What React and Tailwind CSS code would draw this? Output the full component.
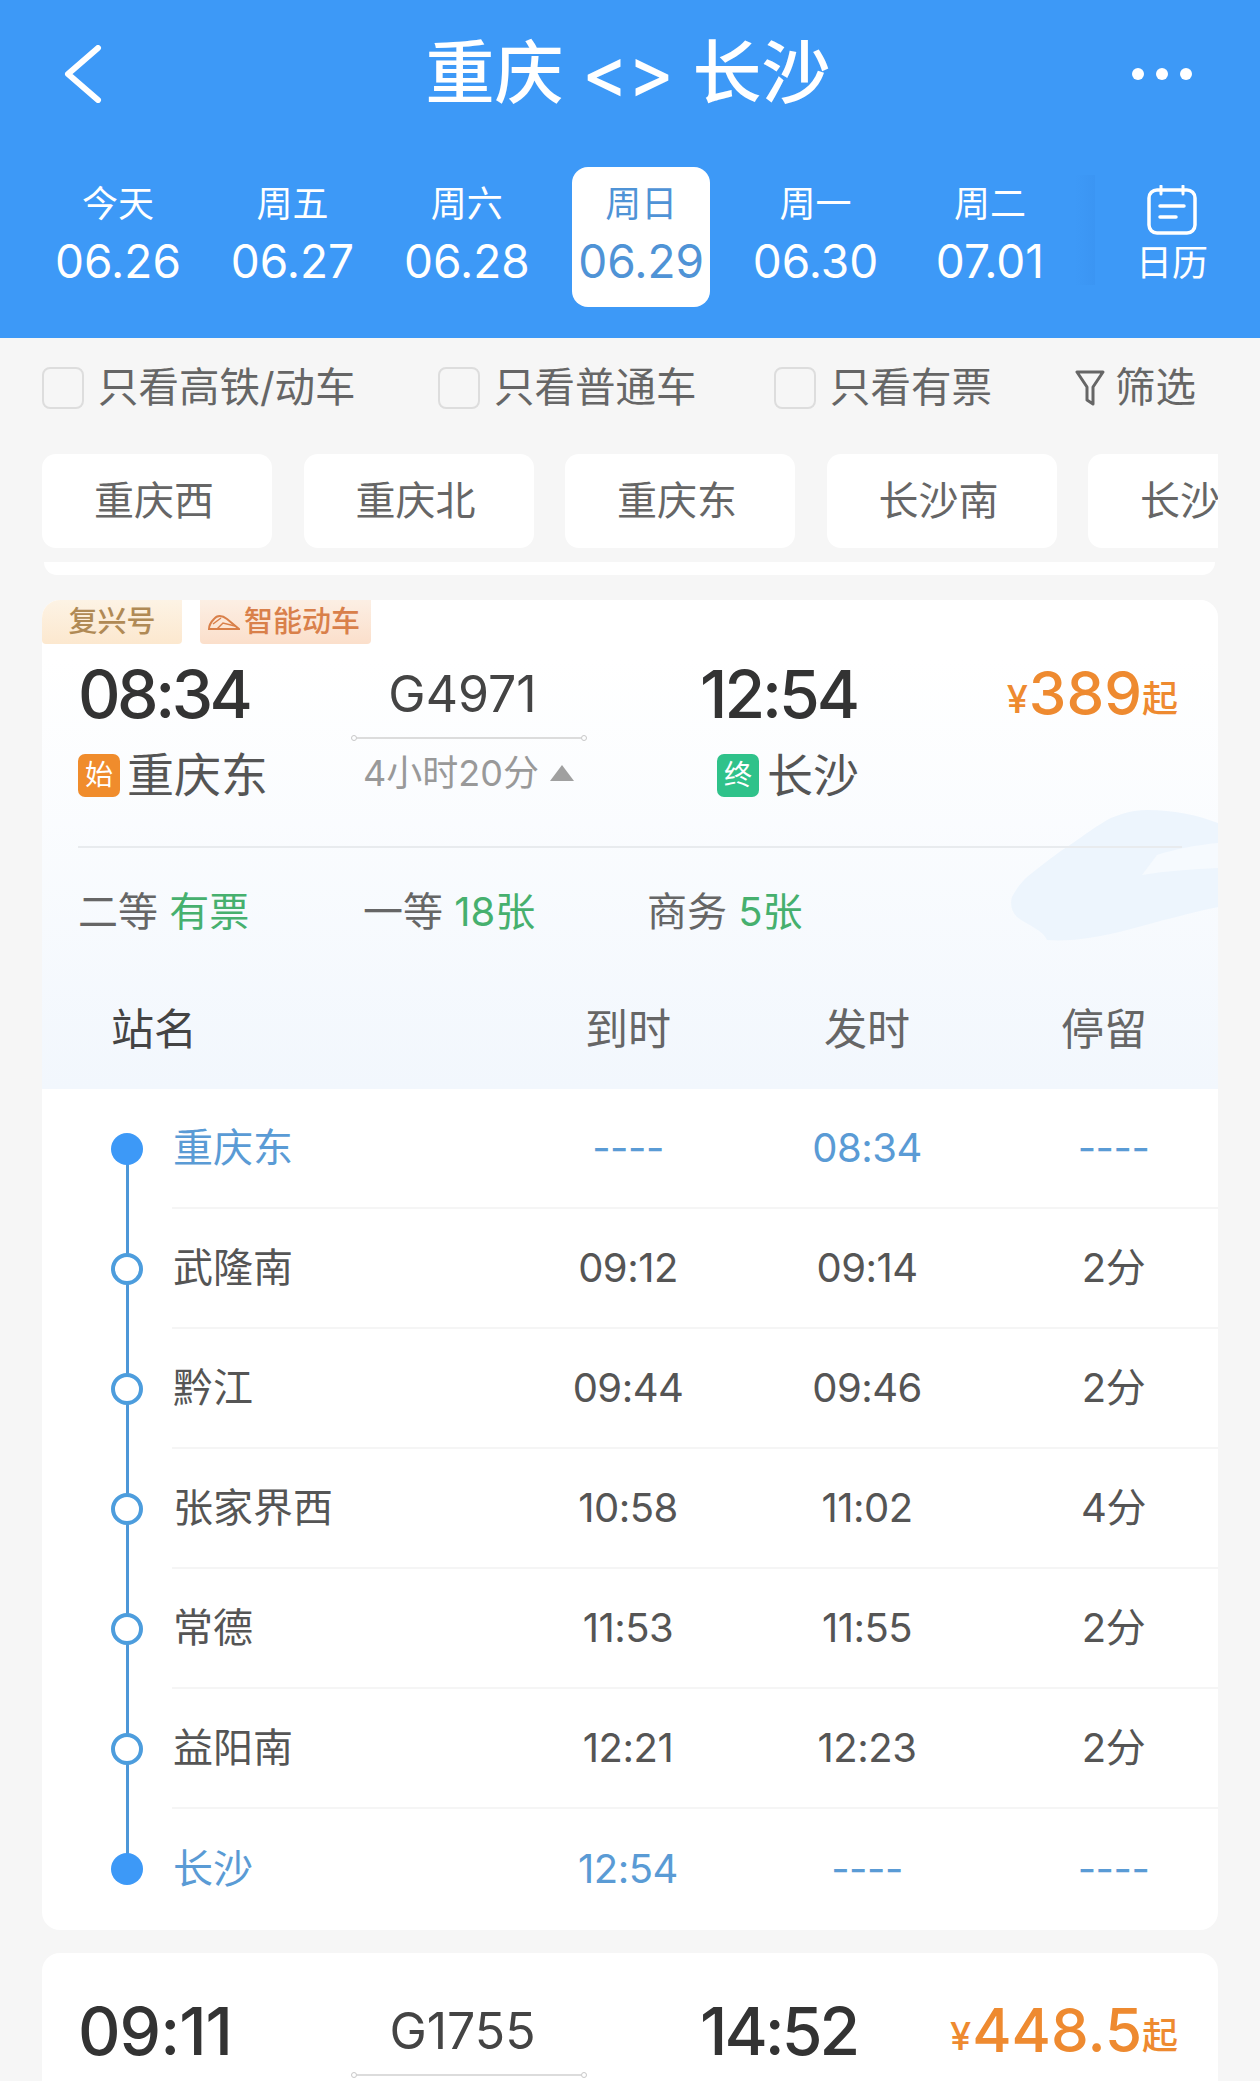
const days = [
  ['今天', '06.26'],
  ['周五', '06.27'],
  ['周六', '06.28'],
  ['周日', '06.29'],
  ['周一', '06.30'],
  ['周二', '07.01'],
]

const filters = [
  ['只看高铁/动车', 'w-[396px]'],
  ['只看普通车', 'w-[336px]'],
  ['只看有票', 'w-[301px]'],
]

const chips = ['重庆西', '重庆北', '重庆东', '长沙南', '长沙']

const stops = [
  { name: '重庆东', arrive: '----', leave: '08:34', stay: '----', edge: true },
  { name: '武隆南', arrive: '09:12', leave: '09:14', stay: '2分' },
  { name: '黔江', arrive: '09:44', leave: '09:46', stay: '2分' },
  { name: '张家界西', arrive: '10:58', leave: '11:02', stay: '4分' },
  { name: '常德', arrive: '11:53', leave: '11:55', stay: '2分' },
  { name: '益阳南', arrive: '12:21', leave: '12:23', stay: '2分' },
  { name: '长沙', arrive: '12:54', leave: '----', stay: '----', edge: true },
]

function BackIcon() {
  return (
    <svg width="38" height="58" viewBox="0 0 38 58" fill="none" stroke="white" strokeWidth="6" strokeLinecap="round" strokeLinejoin="round">
      <path d="M34 3L4 29l30 26" />
    </svg>
  )
}

function CalendarIcon() {
  return (
    <svg width="50" height="50" viewBox="0 0 50 50" fill="none" stroke="white" strokeLinecap="round">
      <rect x="2" y="5" width="46" height="43" rx="8" strokeWidth="3.5" />
      <path d="M14 1v8M36 1v8" strokeWidth="3" />
      <path d="M13 21h24M13 32h16" strokeWidth="3.5" />
    </svg>
  )
}

function FunnelIcon() {
  return (
    <svg width="30" height="36" viewBox="0 0 30 36" fill="none" stroke="#666" strokeWidth="3" strokeLinejoin="round" strokeLinecap="round">
      <path d="M2 2h26L18 17v17l-6-4V17z" />
    </svg>
  )
}

function TrainIcon() {
  return (
    <svg width="32" height="16" viewBox="0 0 32 16" fill="none" stroke="#d9804a" strokeWidth="2">
      <path d="M1 15h30L19 5C14 1 9 1 6 5 3 8 1 11 1 15z" />
      <path d="M5 10l8-6M9 15l6-6 12 3" strokeWidth="1.5" />
    </svg>
  )
}

// faint train nose behind the seat row
function TrainWatermark() {
  return (
    <svg className="absolute left-[968px] top-[208px]" width="208" height="134" viewBox="0 0 208 134">
      <path
        fill="#edf5fd"
        d="M137 2c26 0 50 5 71 13v84c-28 6-58 14-91 23-28 7-56 12-80 10-4-10-18-14-30-23-6-6-7-14-5-20 4-8 9-14 15-20 15-12 30-24 46-34 11-8 24-17 34-23 12-6 26-10 40-10z"
      />
      <path fill="#f6fafe" d="M132 67l15-20c18-6 40-10 61-12v25c-26 1-52 3-76 7z" />
    </svg>
  )
}

function RouteLine() {
  return (
    <div className="flex items-center w-[236px]">
      <span className="w-[6px] h-[6px] rounded-full border border-[#c8c8c8] shrink-0" />
      <span className="flex-1 h-[2px] bg-[#dcdcdc]" />
      <span className="w-[6px] h-[6px] rounded-full border border-[#c8c8c8] shrink-0" />
    </div>
  )
}

function Price({ value }) {
  return (
    <div className="min-w-0 flex items-end justify-end h-[60px] whitespace-nowrap text-[#ee8a30] font-medium">
      <span className="text-[38px] leading-[48px] mr-[1px]">¥</span>
      <span className="text-[60px] leading-[60px]">{value}</span>
      <span className="text-[36px] leading-[48px]">起</span>
    </div>
  )
}

function Tag({ color, label }) {
  return (
    <span className={`w-[42px] h-[43px] rounded-[7px] flex items-center justify-center text-white text-[28px] ${color}`}>
      {label}
    </span>
  )
}

function Clock({ children, tracking = 'tracking-[-3.5px]' }) {
  return <div className={`h-[60px] text-[66px] leading-[62px] font-medium text-[#333333] ${tracking}`}>{children}</div>
}

function TrainCode({ children }) {
  return <div className="h-[60px] w-[223px] text-center text-[50px] leading-[62px] text-[#444444]">{children}</div>
}

function StopDot({ edge }) {
  return edge ? (
    <span className="w-[32px] h-[32px] rounded-full bg-[#3d99f7]" />
  ) : (
    <span className="w-[32px] h-[32px] rounded-full bg-white border-[4px] border-[#4d9ddd]" />
  )
}

function StopRow({ stop, last }) {
  const tone = stop.edge ? 'text-[#5a9bd5]' : 'text-[#555555]'
  return (
    <div className="flex h-[120px]">
      <div className="w-[130px] pl-[69px] flex items-center relative z-10">
        <StopDot edge={stop.edge} />
      </div>
      <div
        className={`flex-1 grid grid-cols-[336px_240px_238px_232px] items-center text-[40px] ${tone} ${
          last ? '' : 'border-b-2 border-[#f5f5f5]'
        }`}
      >
        <div className="pl-[1px]">{stop.name}</div>
        <div className="text-center tracking-[-0.5px]">{stop.arrive}</div>
        <div className="text-center tracking-[-0.5px]">{stop.leave}</div>
        <div className="text-center pl-[23px] tracking-[-0.5px]">{stop.stay}</div>
      </div>
    </div>
  )
}

export default function App() {
  return (
    <div className="w-[1260px] h-[2081px] overflow-hidden bg-[#f6f6f6] font-['Inter','Noto_Sans_CJK_SC',sans-serif]">
      {/* top bar */}
      <header className="h-[338px] bg-[#3d99f7] text-white relative">
        <div className="h-[148px] grid grid-cols-[1fr_auto_1fr] items-center pl-[64px] pr-[68px]">
          <BackIcon />
          <h1 className="text-[69px] font-medium whitespace-pre">重庆 {'<>'} 长沙</h1>
          <div className="flex gap-[12px] justify-end">
            <span className="w-[12px] h-[12px] rounded-full bg-white" />
            <span className="w-[12px] h-[12px] rounded-full bg-white" />
            <span className="w-[12px] h-[12px] rounded-full bg-white" />
          </div>
        </div>
        <div className="flex items-start pl-[49px] pt-[19px] gap-[36.4px]">
          {days.map(([week, date], i) => (
            <div
              key={date}
              className={`w-[138px] h-[140px] rounded-[16px] flex flex-col items-center justify-center pb-[2px] ${
                i === 3 ? 'bg-white text-[#4f93d6]' : ''
              }`}
            >
              <span className="text-[36px] leading-[50px]">{week}</span>
              <span className="text-[46px] leading-[64px]">{date}</span>
            </div>
          ))}
        </div>
        <div className="absolute left-[1075px] top-[175px] w-[20px] h-[110px] bg-gradient-to-r from-[#3d99f7] to-[#3b95f3]" />
        <div className="absolute left-[1124px] top-[185px] w-[96px] flex flex-col items-center">
          <CalendarIcon />
          <span className="text-[36px] leading-[44px] mt-[6px]">日历</span>
        </div>
      </header>

      {/* quick filters */}
      <div className="h-[116px] pl-[42px] pt-[28px] flex items-start text-[40.5px] text-[#666666]">
        {filters.map(([label, width]) => (
          <label key={label} className={`flex items-center gap-[14px] h-[44px] ${width}`}>
            <span className="w-[42px] h-[42px] rounded-[8px] border-2 border-[#dddddd] bg-[#f6f6f6] shrink-0" />
            <span className="leading-[44px] whitespace-nowrap">{label}</span>
          </label>
        ))}
        <div className="flex items-center gap-[10px] h-[44px]">
          <FunnelIcon />
          <span className="leading-[44px]">筛选</span>
        </div>
      </div>

      {/* station chips */}
      <div className="mx-[42px] flex gap-[31.5px] overflow-hidden">
        {chips.map((name) => (
          <div
            key={name}
            className="w-[230px] h-[94px] shrink-0 rounded-[14px] bg-white flex items-center pl-[52px] whitespace-nowrap text-[40px] text-[#666666]"
          >
            {name}
          </div>
        ))}
      </div>

      <div className="ml-[44px] w-[1171px] h-[13px] mt-[14px] bg-white rounded-b-[18px]" />

      {/* expanded train */}
      <section className="mx-[42px] mt-[25px] h-[1330px] bg-white rounded-[18px] overflow-hidden">
        <div className="h-[489px] relative bg-gradient-to-b from-white from-[12%] to-[#f2f7fd]">
          <TrainWatermark />

          <div className="flex gap-[18px] relative">
            <div className="w-[140px] h-[44px] rounded-b-[4px] bg-gradient-to-b from-[#fdf3e5] to-[#fce8cf] flex items-center justify-center text-[29px] font-medium text-[#b08a55]">
              复兴号
            </div>
            <div className="w-[171px] h-[44px] rounded-b-[4px] bg-gradient-to-b from-[#fcefe4] to-[#fbdfcb] flex items-center gap-[4px] pl-[8px] text-[29px] font-medium text-[#d9804a]">
              <TrainIcon />
              智能动车
            </div>
          </div>

          <div className="relative mt-[19px] pl-[36px] pr-[40px] grid grid-cols-[273px_349px_300px_178px]">
            <div>
              <Clock>08:34</Clock>
              <div className="mt-[30px] flex items-center gap-[7px] h-[44px] text-[47px] text-[#555555]">
                <Tag color="bg-[#f08c2c]" label="始" />
                重庆东
              </div>
            </div>
            <div>
              <TrainCode>G4971</TrainCode>
              <div className="mt-[12px]"><RouteLine /></div>
              <div className="mt-[10px] pl-[12px] flex items-center gap-[11px] h-[44px] text-[36px] text-[#999999]">
                4小时20分
                <span className="w-0 h-0 border-x-[12px] border-x-transparent border-b-[16px] border-b-[#a0a0a0]" />
              </div>
            </div>
            <div>
              <Clock tracking="tracking-[-3px]">12:54</Clock>
              <div className="mt-[30px] ml-[17px] flex items-center gap-[8px] h-[44px] text-[46px] text-[#555555]">
                <Tag color="bg-[#2fc28a]" label="终" />
                长沙
              </div>
            </div>
            <Price value="389" />
          </div>

          <div className="relative mx-[36px] mt-[49px] h-[2px] bg-[#e8ebee]" />

          <div className="relative mt-[39px] pl-[36px] h-[50px] flex items-center text-[40px] text-[#666666]">
            <div className="w-[285px]">二等 <span className="text-[#46b06e]">有票</span></div>
            <div className="w-[284px]">一等 <span className="text-[#46b06e]">18张</span></div>
            <div>商务 <span className="text-[#46b06e]">5张</span></div>
          </div>

          <div className="relative mt-[67px] flex h-[50px] items-center text-[43px] text-[#666666]">
            <div className="w-[132px] shrink-0" />
            <div className="grid grid-cols-[334px_240px_238px_232px] shrink-0">
              <div className="-ml-[63px] text-[#444444]">站名</div>
              <div className="text-center">到时</div>
              <div className="text-center">发时</div>
              <div className="text-center pl-[4px]">停留</div>
            </div>
          </div>
        </div>

        <div className="relative">
          <div className="absolute left-[84px] top-[60px] bottom-[60px] w-[3px] bg-[#4d97d8]" />
          {stops.map((stop, i) => (
            <StopRow key={stop.name} stop={stop} last={i === stops.length - 1} />
          ))}
        </div>
      </section>

      {/* next train, cut off by the fold */}
      <section className="mx-[42px] mt-[23px] h-[200px] bg-white rounded-t-[18px] pt-[47px] pl-[36px] pr-[40px] grid grid-cols-[273px_349px_300px_178px] content-start">
        <Clock tracking="tracking-[-1px]">09:11</Clock>
        <div>
          <TrainCode>G1755</TrainCode>
          <div className="mt-[12px]"><RouteLine /></div>
        </div>
        <Clock tracking="tracking-[-3px]">14:52</Clock>
        <Price value="448.5" />
      </section>
    </div>
  )
}
